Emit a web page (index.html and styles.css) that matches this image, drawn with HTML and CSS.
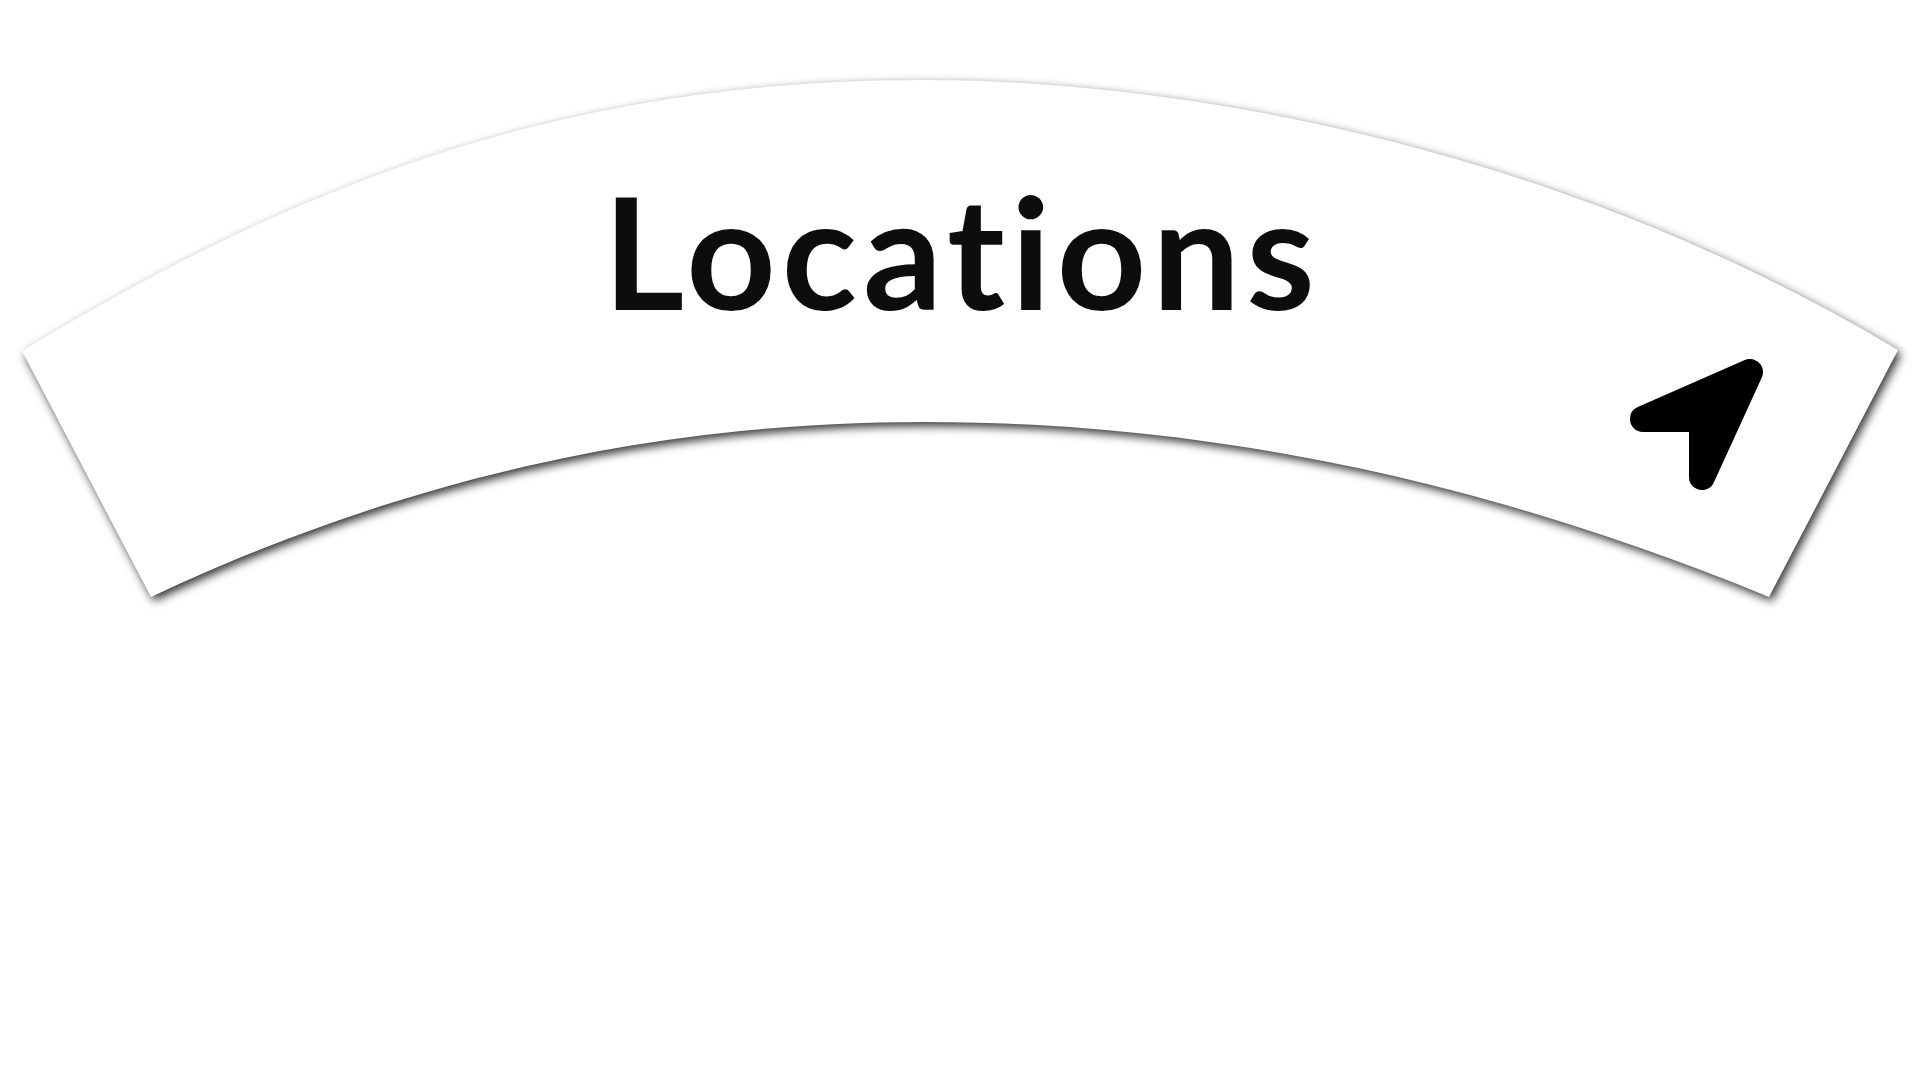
FILE: index.html
```html
<!DOCTYPE html>
<html lang="en">
<head>
    <meta charset="UTF-8">
    <meta name="viewport" content="width=device-width, initial-scale=1.0">
    <link rel="stylesheet" href="styles.css">
    <title>Locations</title>
</head>
<body>
    <div class="arc-shadow">
        <div class="arc-menu">
            <h1 class="arc-title">Locations</h1>
            <!-- Locate arrow -->
            <svg class="locate-icon" viewBox="0 0 134 132" width="134" height="132" aria-hidden="true">
                <path d="M13 60 L120 13 L72 118 V60 Z"></path>
            </svg>
        </div>
    </div>
</body>
</html>
```

FILE: styles.css
```css
body {
    margin: 0;
    background-color: #fff;
    font-family: "Lato", "Open Sans", sans-serif;
    overflow: hidden;
}

.arc-shadow {
    filter: drop-shadow(3px 4px 5px rgba(0, 0, 0, 0.8));
}

.arc-menu {
    position: relative;
    height: 620px;
    background-color: #fff;
    display: flex;
    justify-content: center;
    align-items: flex-start;
    clip-path: path("M22 351 C322 168 590 80 924 80 C1194 80 1567 151 1898 350 L1769 597 C1489 482 1213 422 924 422 C663 422 411 475 151 597 Z");
}

.arc-title {
    margin: 0;
    padding: 160px 0 0 4px;
    font-size: 156px;
    line-height: 180px;
    font-weight: 700;
    letter-spacing: 6px;
    font-variant-ligatures: none;
    color: #0d0d0d;
}

.locate-icon {
    position: absolute;
    left: 1630px;
    top: 359px;
}

.locate-icon path {
    fill: #000;
    stroke: #000;
    stroke-width: 26;
    stroke-linejoin: round;
}
```
